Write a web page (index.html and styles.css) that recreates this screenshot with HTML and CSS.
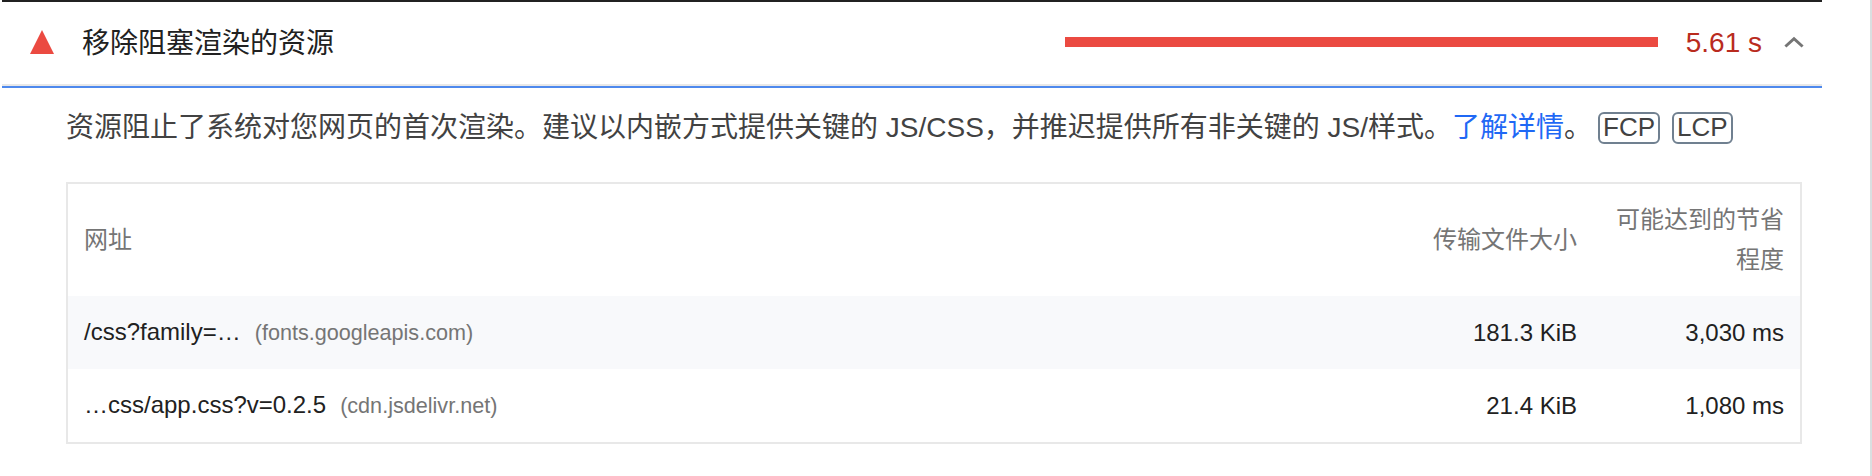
FILE: index.html
```html
<!DOCTYPE html>
<html lang="zh-CN">
<head>
<meta charset="utf-8">
<title>移除阻塞渲染的资源</title>
<link rel="stylesheet" href="styles.css">
</head>
<body>
<main class="panel">
  <section class="audit">
    <header class="audit-header">
      <svg class="icon-fail" viewBox="0 0 24 24"><path d="M12 0L24 24H0z"/></svg>
      <h2 class="audit-title">移除阻塞渲染的资源</h2>
      <div class="bar"></div>
      <span class="audit-value">5.61 s</span>
      <svg class="chevron" viewBox="0 0 20 12"><path d="M1.4 10.5L10 2.7L18.6 10.5"/></svg>
    </header>
    <div class="audit-body">
      <p class="description"><span>资源阻止了系统对您网页的首次渲染。建议以内嵌方式提供关键的 JS/CSS，并推迟提供所有非关键的 JS/样式。<a class="link">了解详情</a>。</span><span class="badge">FCP</span><span class="badge">LCP</span></p>
      <table class="table">
        <thead>
          <tr><th class="url">网址</th><th class="size">传输文件大小</th><th class="saving">可能达到的节省程度</th></tr>
        </thead>
        <tbody>
          <tr class="shaded"><td class="url">/css?family=…<span class="host">(fonts.googleapis.com)</span></td><td>181.3 KiB</td><td>3,030 ms</td></tr>
          <tr><td class="url">…css/app.css?v=0.2.5<span class="host">(cdn.jsdelivr.net)</span></td><td>21.4 KiB</td><td>1,080 ms</td></tr>
        </tbody>
      </table>
    </div>
  </section>
</main>
</body>
</html>
```
FILE: styles.css
```css
* { box-sizing: border-box; }
body {
  margin: 0;
  background: #fff;
  color: #212121;
  font-family: "Liberation Sans", "Noto Sans CJK SC", sans-serif;
}
.panel {
  height: 476px;
  padding: 0 48px 0 2px;
  border-right: 2px solid #dadfe0;
}
.audit { border-top: 2px solid #212121; }
.audit-header {
  display: flex;
  align-items: center;
  height: 86px;
  padding: 0 18px 4px 28px;
  border-bottom: 2px solid #4e89ed;
  box-shadow: inset 0 -2px #e8e8e8;
}
.icon-fail { width: 24px; height: 24px; fill: #eb4a41; }
.audit-title {
  margin: 0 auto 0 28px;
  padding-top: 3px;
  font-size: 28px;
  font-weight: 400;
  line-height: 40px;
}
.bar { width: 593px; height: 10px; background: #eb4a41; }
.audit-value {
  margin-left: 28px;
  padding-top: 2px;
  color: #b92b1e;
  font-size: 28px;
  line-height: 40px;
}
.chevron {
  width: 20px;
  height: 12px;
  margin-left: 22px;
  fill: none;
  stroke: #757575;
  stroke-width: 3;
}
.audit-body { padding: 16px 20px 0 64px; }
.description {
  display: flex;
  align-items: center;
  height: 48px;
  margin: 0 0 30px;
  color: #424242;
  font-size: 28px;
  line-height: 48px;
  white-space: nowrap;
}
.link { color: #1f68f5; }
.badge {
  height: 32px;
  margin-left: 12px;
  padding: 0 3px;
  border: 2px solid #708090;
  border-radius: 6px;
  font-size: 26px;
  line-height: 26px;
}
.link + .badge, span:first-child + .badge { margin-left: 6px; }
.table {
  width: 1736px;
  border: 2px solid #e8e8e8;
  border-spacing: 0;
  table-layout: fixed;
  font-size: 24px;
}
th, td {
  padding: 0 16px;
  text-align: right;
  vertical-align: middle;
  font-weight: 400;
  line-height: 40px;
}
th { height: 112px; color: #757575; }
td { height: 73px; }
.url { text-align: left; }
.size { width: 200px; }
.saving { width: 207px; }
.shaded { background: #f8f9fb; }
.host { margin-left: 14px; color: #757575; font-size: 21.6px; }
```
